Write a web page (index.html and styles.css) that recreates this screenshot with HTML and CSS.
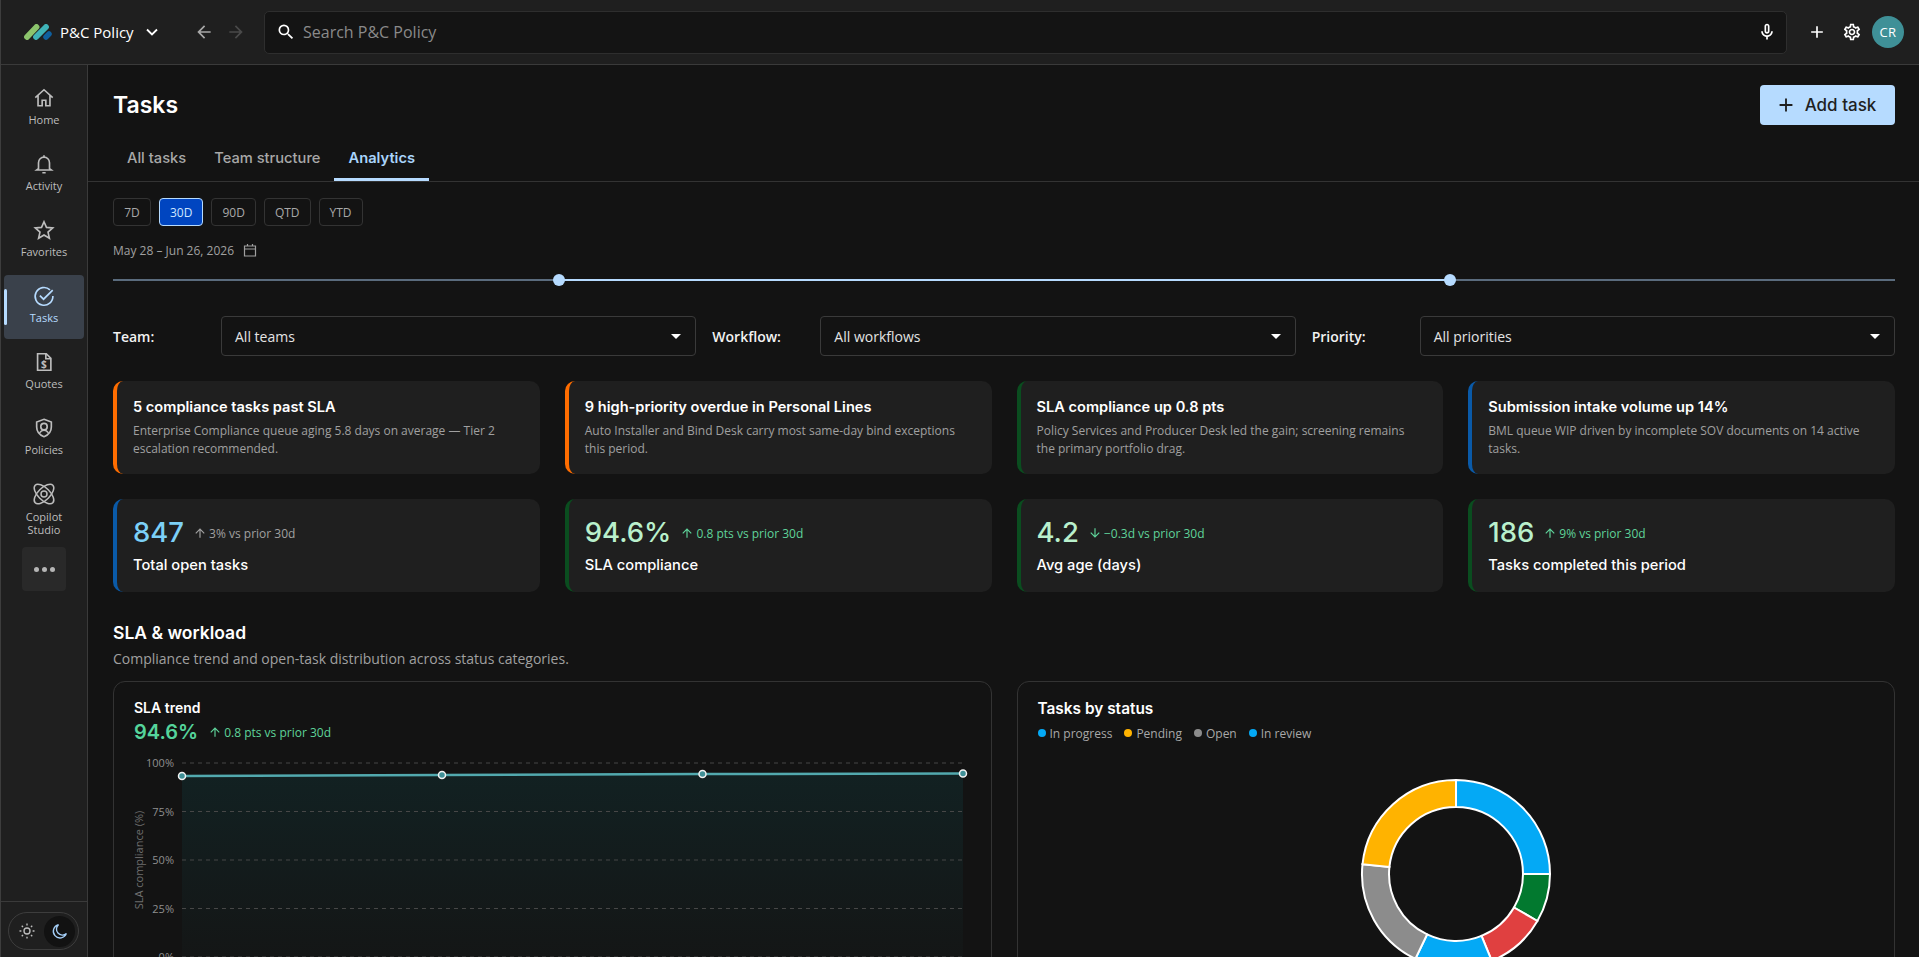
FILE: index.html
```html
<!DOCTYPE html>
<html lang="en">
<head>
    <meta charset="UTF-8">
    <meta name="viewport" content="width=device-width, initial-scale=1.0">
    <title>Tasks - P&amp;C Policy</title>
    <link rel="stylesheet" href="styles.css">
</head>
<body>
<div class="app">

    <header class="topbar">
        <div class="brand">
            <svg class="logo" viewBox="0 0 28 16" width="28" height="16">
                <line x1="3" y1="13" x2="12.5" y2="3" stroke="#8cc46c" stroke-width="5.8" stroke-linecap="round"/>
                <line x1="12" y1="13" x2="22" y2="3" stroke="#3fb3b8" stroke-width="5.8" stroke-linecap="round"/>
                <line x1="22" y1="13" x2="25" y2="10" stroke="#0f5f9e" stroke-width="5.5" stroke-linecap="round"/>
            </svg>
            <span class="brand-name">P&amp;C Policy</span>
            <svg class="chevron" viewBox="0 0 12 8" width="12" height="8"><path d="M1 1.5l5 5 5-5" fill="none" stroke="#fff" stroke-width="1.8"/></svg>
        </div>
        <div class="nav-arrows">
            <svg viewBox="0 0 24 24" width="20" height="20"><path d="M20 11v2H7.8l5.6 5.6L12 20l-8-8 8-8 1.4 1.4L7.8 11z" fill="#a8a8a8"/></svg>
            <svg viewBox="0 0 24 24" width="20" height="20"><path d="M4 11v2h12.2l-5.6 5.6L12 20l8-8-8-8-1.4 1.4 5.6 5.6z" fill="#4a4a4a"/></svg>
        </div>
        <div class="search">
            <svg viewBox="0 0 24 24" width="20" height="20"><path fill="#fff" d="M15.5 14h-.79l-.28-.27A6.471 6.471 0 0 0 16 9.5 6.5 6.5 0 1 0 9.5 16c1.61 0 3.09-.59 4.23-1.57l.27.28v.79l5 4.99L20.49 19l-4.99-5zm-6 0C7.01 14 5 11.99 5 9.5S7.01 5 9.5 5 14 7.01 14 9.5 11.99 14 9.5 14z"/></svg>
            <span class="search-text">Search P&amp;C Policy</span>
            <svg class="mic" viewBox="0 0 24 24" width="20" height="20"><path fill="#fff" d="M12 14c1.66 0 3-1.34 3-3V5c0-1.66-1.34-3-3-3S9 3.34 9 5v6c0 1.66 1.34 3 3 3zm-1-9c0-.55.45-1 1-1s1 .45 1 1v6c0 .55-.45 1-1 1s-1-.45-1-1V5z M17 11c0 2.76-2.24 5-5 5s-5-2.24-5-5H5c0 3.53 2.61 6.43 6 6.92V21h2v-3.08c3.39-.49 6-3.39 6-6.92h-2z"/></svg>
        </div>
        <div class="top-actions">
            <svg viewBox="0 0 24 24" width="20" height="20"><path fill="#fff" d="M19 13h-6v6h-2v-6H5v-2h6V5h2v6h6z"/></svg>
            <svg viewBox="0 0 24 24" width="20" height="20"><path fill="#fff" d="M19.43 12.98c.04-.32.07-.64.07-.98 0-.34-.03-.66-.07-.98l2.11-1.65c.19-.15.24-.42.12-.64l-2-3.46c-.09-.16-.26-.25-.44-.25-.06 0-.12.01-.17.03l-2.49 1c-.52-.4-1.08-.73-1.69-.98l-.38-2.65C14.46 2.18 14.25 2 14 2h-4c-.25 0-.46.18-.49.42l-.38 2.65c-.61.25-1.17.59-1.69.98l-2.49-1c-.06-.02-.12-.03-.18-.03-.17 0-.34.09-.43.25l-2 3.46c-.13.22-.07.49.12.64l2.11 1.65c-.04.32-.07.65-.07.98 0 .33.03.66.07.98l-2.11 1.65c-.19.15-.24.42-.12.64l2 3.46c.09.16.26.25.44.25.06 0 .12-.01.17-.03l2.49-1c.52.4 1.08.73 1.69.98l.38 2.65c.03.24.24.42.49.42h4c.25 0 .46-.18.49-.42l.38-2.65c.61-.25 1.17-.59 1.69-.98l2.49 1c.06.02.12.03.18.03.17 0 .34-.09.43-.25l2-3.46c.12-.22.07-.49-.12-.64l-2.11-1.65zm-1.98-1.71c.04.31.05.52.05.73 0 .21-.02.43-.05.73l-.14 1.13.89.7 1.08.84-.7 1.21-1.27-.51-1.04-.42-.9.68c-.43.32-.84.56-1.25.73l-1.06.43-.16 1.13-.2 1.35h-1.4l-.19-1.35-.16-1.13-1.06-.43c-.43-.18-.83-.41-1.23-.71l-.91-.7-1.06.43-1.27.51-.7-1.21 1.08-.84.89-.7-.14-1.13c-.03-.31-.05-.54-.05-.74s.02-.43.05-.73l.14-1.13-.89-.7-1.08-.84.7-1.21 1.27.51 1.04.42.9-.68c.43-.32.84-.56 1.25-.73l1.06-.43.16-1.13.2-1.35h1.39l.19 1.35.16 1.13 1.06.43c.43.18.83.41 1.23.71l.91.7 1.06-.43 1.27-.51.7 1.21-1.07.85-.89.7.14 1.13zM12 8c-2.21 0-4 1.79-4 4s1.79 4 4 4 4-1.79 4-4-1.79-4-4-4zm0 6c-1.1 0-2-.9-2-2s.9-2 2-2 2 .9 2 2-.9 2-2 2z"/></svg>
            <div class="avatar">CR</div>
        </div>
    </header>

    <div class="body-row">
        <nav class="rail">
            <a class="rail-item">
                <svg viewBox="0 0 24 24" width="22" height="22" class="rail-icon"><path d="M2.5 11.5 12 3l9.5 8.5M5.5 9v11.5H10V14.5h4v6h4.5V9"/></svg>
                <span>Home</span>
            </a>
            <a class="rail-item">
                <svg viewBox="0 0 24 24" width="22" height="22" class="rail-icon"><path d="M12 2.5v2M6 17v-6.5a6 6 0 0 1 12 0V17l2 1.5H4zM10.2 21.5h3.6"/></svg>
                <span>Activity</span>
            </a>
            <a class="rail-item">
                <svg viewBox="0 0 24 24" width="22" height="22" class="rail-icon"><path d="M12 3l2.7 6.2 6.8.6-5.1 4.5 1.5 6.7L12 17.5 6.100 21l1.500-6.700L2.500 9.800l6.800-.6z"/></svg>
                <span>Favorites</span>
            </a>
            <a class="rail-item active">
                <svg viewBox="0 0 24 24" width="22" height="22" class="rail-icon"><path d="M18.500 5.200A9.700 9.700 0 1 0 21.700 12M7.500 11.500l4 4L21.500 5.500"/></svg>
                <span>Tasks</span>
            </a>
            <a class="rail-item">
                <svg viewBox="0 0 24 24" width="22" height="22" class="rail-icon"><path d="M5 3h9.500L19.500 8v13H5zM14 3v5.500h5.500"/><text x="12" y="18.500" class="doc-sign">$</text></svg>
                <span>Quotes</span>
            </a>
            <a class="rail-item">
                <svg viewBox="0 0 24 24" width="22" height="22" class="rail-icon"><path d="M12 2.500 20 5.500V11c0 5-3.300 8.800-8 10.500C7.300 19.800 4 16 4 11V5.500zM7.500 17c1-1.800 2.600-2.500 4.500-2.500s3.500.7 4.500 2.500"/><circle cx="12" cy="10.500" r="3.500"/></svg>
                <span>Policies</span>
            </a>
            <a class="rail-item">
                <svg viewBox="0 0 24 24" width="24" height="24" class="rail-icon thin"><ellipse cx="12" cy="12" rx="12.500" ry="6" transform="rotate(45 12 12)"/><ellipse cx="12" cy="12" rx="12.500" ry="6" transform="rotate(-45 12 12)"/><circle cx="12" cy="12" r="3"/></svg>
                <span>Copilot<br>Studio</span>
            </a>
            <div class="rail-more"><i></i><i></i><i></i></div>
            <div class="theme-wrap">
                <div class="theme-toggle">
                    <span class="theme-sun">
                        <svg viewBox="0 0 24 24" width="18" height="18" class="rail-icon"><circle cx="12" cy="12" r="4"/><path d="M12 2v2.500M12 19.500V22M2 12h2.500M19.500 12H22M5 5l1.700 1.700M17.300 17.300 19 19M5 19l1.700-1.700M17.300 6.700 19 5"/></svg>
                    </span>
                    <span class="theme-moon">
                        <svg viewBox="0 0 24 24" width="18" height="18"><path d="M20.500 15.500A9 9 0 1 1 10 3.500a7.500 7.500 0 0 0 10.500 12z" fill="none" stroke="#a5cff8" stroke-width="1.800"/></svg>
                    </span>
                </div>
            </div>
        </nav>

        <main class="main">
            <div class="page-head">
                <h1>Tasks</h1>
                <button class="add-btn">
                    <svg viewBox="0 0 24 24" width="22" height="22"><path fill="#1f1f1f" d="M19 13h-6v6h-2v-6H5v-2h6V5h2v6h6z"/></svg>
                    Add task
                </button>
            </div>

            <div class="tabs">
                <a class="tab">All tasks</a>
                <a class="tab">Team structure</a>
                <a class="tab active">Analytics</a>
            </div>

            <div class="range-row">
                <button class="range">7D</button>
                <button class="range on">30D</button>
                <button class="range">90D</button>
                <button class="range">QTD</button>
                <button class="range">YTD</button>
            </div>

            <div class="date-row">
                May 28 – Jun 26, 2026
                <svg viewBox="0 0 14 14" width="14" height="14"><path d="M1.500 3h11v10h-11zM1.500 6h11M4.500 1v2.500M9.500 1v2.500" fill="none" stroke="#a0a0a0" stroke-width="1.200"/></svg>
            </div>

            <div class="slider">
                <div class="slider-on" style="left: 25.03%; right: 25%"></div>
                <div class="thumb" style="left: 25.03%"></div>
                <div class="thumb" style="left: 75%"></div>
            </div>

            <div class="filters">
                <div class="filter">
                    <label>Team:</label>
                    <div class="select">All teams<i></i></div>
                </div>
                <div class="filter">
                    <label>Workflow:</label>
                    <div class="select">All workflows<i></i></div>
                </div>
                <div class="filter">
                    <label>Priority:</label>
                    <div class="select">All priorities<i></i></div>
                </div>
            </div>

            <div class="card-grid insights">
                <div class="card edge-orange">
                    <h3>5 compliance tasks past SLA</h3>
                    <p>Enterprise Compliance queue aging 5.8 days on average — Tier 2 escalation recommended.</p>
                </div>
                <div class="card edge-orange">
                    <h3>9 high-priority overdue in Personal Lines</h3>
                    <p>Auto Installer and Bind Desk carry most same-day bind exceptions this period.</p>
                </div>
                <div class="card edge-green">
                    <h3>SLA compliance up 0.8 pts</h3>
                    <p>Policy Services and Producer Desk led the gain; screening remains the primary portfolio drag.</p>
                </div>
                <div class="card edge-blue">
                    <h3>Submission intake volume up 14%</h3>
                    <p>BML queue WIP driven by incomplete SOV documents on 14 active tasks.</p>
                </div>
            </div>

            <div class="card-grid kpis">
                <div class="card edge-blue">
                    <div class="kpi-top">
                        <span class="kpi-num blue">847</span>
                        <span class="delta gray"><svg viewBox="0 0 24 24" width="14" height="14"><path d="M4 12l1.410 1.410L11 7.830V20h2V7.830l5.580 5.590L20 12l-8-8z"/></svg>3% vs prior 30d</span>
                    </div>
                    <div class="kpi-label">Total open tasks</div>
                </div>
                <div class="card edge-green">
                    <div class="kpi-top">
                        <span class="kpi-num mint">94.6%</span>
                        <span class="delta"><svg viewBox="0 0 24 24" width="14" height="14"><path d="M4 12l1.410 1.410L11 7.830V20h2V7.830l5.580 5.590L20 12l-8-8z"/></svg>0.8 pts vs prior 30d</span>
                    </div>
                    <div class="kpi-label">SLA compliance</div>
                </div>
                <div class="card edge-green">
                    <div class="kpi-top">
                        <span class="kpi-num mint">4.2</span>
                        <span class="delta"><svg viewBox="0 0 24 24" width="14" height="14"><path d="M20 12l-1.410-1.410L13 16.170V4h-2v12.170l-5.580-5.590L4 12l8 8z"/></svg>−0.3d vs prior 30d</span>
                    </div>
                    <div class="kpi-label">Avg age (days)</div>
                </div>
                <div class="card edge-green">
                    <div class="kpi-top">
                        <span class="kpi-num mint">186</span>
                        <span class="delta"><svg viewBox="0 0 24 24" width="14" height="14"><path d="M4 12l1.410 1.410L11 7.830V20h2V7.830l5.580 5.590L20 12l-8-8z"/></svg>9% vs prior 30d</span>
                    </div>
                    <div class="kpi-label">Tasks completed this period</div>
                </div>
            </div>

            <h2 class="section-title">SLA &amp; workload</h2>
            <p class="section-sub">Compliance trend and open-task distribution across status categories.</p>

            <div class="charts">
                <section class="chart-card">
                    <h4>SLA trend</h4>
                    <div class="trend-head">
                        <span class="trend-num">94.6%</span>
                        <span class="delta"><svg viewBox="0 0 24 24" width="14" height="14"><path d="M4 12l1.410 1.410L11 7.830V20h2V7.830l5.580 5.590L20 12l-8-8z"/></svg>0.8 pts vs prior 30d</span>
                    </div>
                    <svg class="trend" viewBox="0 0 836 220" width="836" height="220">
                        <defs>
                            <linearGradient id="areaFill" x1="0" y1="0" x2="0" y2="1">
                                <stop offset="0" stop-color="#122122"/>
                                <stop offset="1" stop-color="#141616"/>
                            </linearGradient>
                        </defs>
                        <path d="M48 26 L308 25 L568.500 24 L829 23.500 V207 H48z" fill="url(#areaFill)"/>
                        <g class="grid">
                            <line x1="48" y1="13" x2="829" y2="13"/>
                            <line x1="48" y1="61.500" x2="829" y2="61.500"/>
                            <line x1="48" y1="110" x2="829" y2="110"/>
                            <line x1="48" y1="158.500" x2="829" y2="158.500"/>
                            <line x1="48" y1="207" x2="829" y2="207"/>
                        </g>
                        <g class="ticks">
                            <text x="40" y="17">100%</text>
                            <text x="40" y="65.500">75%</text>
                            <text x="40" y="114">50%</text>
                            <text x="40" y="162.500">25%</text>
                            <text x="40" y="211">0%</text>
                        </g>
                        <text class="axis-name" transform="translate(9 110) rotate(-90)">SLA compliance (%)</text>
                        <polyline points="48,26 308,25 568.500,24 829,23.500" fill="none" stroke="#52a9ae" stroke-width="2.500"/>
                        <g class="points">
                            <circle cx="48" cy="26" r="3.500"/>
                            <circle cx="308" cy="25" r="3.500"/>
                            <circle cx="568.500" cy="24" r="3.500"/>
                            <circle cx="829" cy="23.500" r="3.500"/>
                        </g>
                    </svg>
                </section>

                <section class="chart-card">
                    <h4 class="status-title">Tasks by status</h4>
                    <div class="legend">
                        <span><i class="dot-blue"></i>In progress</span>
                        <span><i class="dot-amber"></i>Pending</span>
                        <span><i class="dot-gray"></i>Open</span>
                        <span><i class="dot-blue"></i>In review</span>
                    </div>
                    <svg class="donut" viewBox="-96 -96 192 192" width="192" height="192">
                        <g stroke="#fff" stroke-width="2">
                            <path fill="#04a9f5" d="M0 -94A94 94 0 0 1 94 0H67A67 67 0 0 0 0 -67z"/>
                            <path fill="#02792f" d="M94 0A94 94 0 0 1 81.400 47L58 33.500A67 67 0 0 0 67 0z"/>
                            <path fill="#e04040" d="M81.400 47A94 94 0 0 1 35.800 86.900L25.500 61.900A67 67 0 0 0 58 33.500z"/>
                            <path fill="#04a9f5" d="M35.800 86.900A94 94 0 0 1 -40.600 84.800L-28.900 60.400A67 67 0 0 0 25.500 61.900z"/>
                            <path fill="#8c8c8c" d="M-40.600 84.800A94 94 0 0 1 -93.500 -9.800L-66.600 -7A67 67 0 0 0 -28.900 60.400z"/>
                            <path fill="#ffb300" d="M-93.500 -9.800A94 94 0 0 1 0 -94V-67A67 67 0 0 0 -66.600 -7z"/>
                        </g>
                    </svg>
                </section>
            </div>
        </main>
    </div>
</div>
</body>
</html>
```

FILE: styles.css
```css
* {
    margin: 0;
    padding: 0;
    box-sizing: border-box;
}

html, body {
    height: 100%;
    overflow: hidden;
}

body {
    font-family: "Open Sans", "Noto Sans", Arial, sans-serif;
    background-color: #131313;
    color: #fff;
}

.app {
    height: 100vh;
    display: flex;
    flex-direction: column;
    border-left: 1px solid #3d3d3d;
}

/* top bar */
.topbar {
    height: 65px;
    flex-shrink: 0;
    display: flex;
    align-items: center;
    background-color: #1f1f1f;
    border-bottom: 1px solid #3a3a3a;
    padding: 0 15px 0 23px;
}

.brand {
    display: flex;
    align-items: center;
    width: 170px;
}

.brand-name {
    font-size: 15px;
    font-weight: 500;
    margin-left: 8px;
    margin-right: 12px;
    white-space: nowrap;
}

.nav-arrows {
    display: flex;
    gap: 12px;
    width: 70px;
}

.search {
    width: 1523px;
    height: 43px;
    display: flex;
    align-items: center;
    background-color: #141414;
    border: 1px solid #2e2e2e;
    border-radius: 5px;
    padding: 0 9px 0 11px;
}

.search-text {
    margin-left: 7px;
    font-size: 16px;
    color: #8a8a8a;
    flex-grow: 1;
}

.top-actions {
    display: flex;
    align-items: center;
    margin-left: 20px;
    gap: 15px;
}

.top-actions svg:nth-child(2) {
    margin-right: -5px;
}

.avatar {
    width: 32px;
    height: 32px;
    border-radius: 50%;
    background-color: #3f9097;
    color: #fff;
    font-size: 13px;
    font-weight: 500;
    letter-spacing: 0.5px;
    display: flex;
    align-items: center;
    justify-content: center;
}

.body-row {
    flex-grow: 1;
    display: flex;
    min-height: 0;
}

/* left rail */
.rail {
    width: 87px;
    flex-shrink: 0;
    background-color: #1f1f1f;
    border-right: 1px solid #3a3a3a;
    padding: 12px 3px 0;
    display: flex;
    flex-direction: column;
    align-items: stretch;
    gap: 2px;
}

.rail-item {
    height: 64px;
    border-radius: 4px;
    padding-top: 10px;
    display: flex;
    flex-direction: column;
    align-items: center;
    gap: 4px;
    font-size: 11px;
    line-height: 14px;
    color: #bdbdbd;
    text-align: center;
    position: relative;
}

.rail-item:nth-child(7) {
    height: 68px;
    line-height: 13px;
}

.rail-item:nth-child(7) .rail-icon {
    margin: -1px 0 0;
}

.rail-icon {
    fill: none;
    stroke: #bdbdbd;
    stroke-width: 1.800;
    flex-shrink: 0;
    overflow: visible;
}

.rail-icon.thin {
    stroke-width: 1.500;
}

.doc-sign {
    fill: #bdbdbd;
    stroke: none;
    font-family: "Open Sans", sans-serif;
    font-size: 11px;
    font-weight: 700;
    text-anchor: middle;
}

.rail-item.active {
    background-color: #3a414b;
    color: #b6dbff;
}

.rail-item.active .rail-icon {
    stroke: #b6dbff;
}

.rail-item.active::before {
    content: "";
    position: absolute;
    left: 0;
    top: 14px;
    width: 3px;
    height: 36px;
    border-radius: 2px;
    background-color: #b6dbff;
}

.rail-more {
    width: 44px;
    height: 44px;
    margin: 4px auto 0;
    border-radius: 4px;
    background-color: #292929;
    display: flex;
    align-items: center;
    justify-content: center;
    gap: 3px;
}

.rail-more i {
    width: 5px;
    height: 5px;
    border-radius: 50%;
    background-color: #b5b5b5;
}

.theme-wrap {
    margin: auto -3px 0;
    border-top: 1px solid #3a3a3a;
    padding: 10px 7px 7px;
}

.theme-toggle {
    height: 38px;
    width: 71px;
    border: 1px solid #3d3d3d;
    border-radius: 19px;
    display: flex;
    align-items: center;
    padding: 0 3px 0 9px;
    justify-content: space-between;
}

.theme-sun {
    display: flex;
}

.theme-moon {
    width: 31px;
    height: 31px;
    border-radius: 50%;
    background-color: #121212;
    display: flex;
    align-items: center;
    justify-content: center;
}

/* main column */
.main {
    flex-grow: 1;
    min-width: 0;
    padding: 20px 24px 0 25px;
    overflow: hidden;
}

.page-head {
    display: flex;
    align-items: center;
    justify-content: space-between;
    height: 40px;
    margin-bottom: 10px;
}

.page-head h1 {
    font-family: Inter, "Open Sans", sans-serif;
    font-size: 23px;
    font-weight: 600;
}

.add-btn {
    width: 135px;
    height: 40px;
    border: none;
    border-radius: 4px;
    padding-right: 4px;
    background-color: #b6dbff;
    color: #1f1f1f;
    font-family: Inter, sans-serif;
    font-size: 17px;
    font-weight: 500;
    display: flex;
    align-items: center;
    justify-content: center;
    gap: 8px;
}

.tabs {
    display: flex;
    height: 47px;
    margin: 0 -24px 0 -25px;
    padding-left: 25px;
    border-bottom: 1px solid #333;
}

.tab {
    height: 46px;
    padding: 0 14px;
    line-height: 46px;
    font-family: Inter, sans-serif;
    font-size: 14.7px;
    font-weight: 500;
    color: #a8a8a8;
}

.tab.active {
    color: #a9d4fb;
    font-weight: 600;
    border-bottom: 3px solid #b6dbff;
    border-radius: 3px 3px 0 0;
}

.range-row {
    display: flex;
    gap: 8px;
    margin-top: 16px;
}

.range {
    height: 28px;
    padding: 0 10px;
    min-width: 38px;
    background: transparent;
    border: 1px solid #333;
    border-radius: 4px;
    color: #a8a8a8;
    font-family: "Open Sans", sans-serif;
    font-size: 12px;
}

.range.on {
    background-color: #0045c0;
    border-color: #b6dbff;
    color: #cfe5ff;
    font-weight: 500;
}

.date-row {
    display: flex;
    align-items: center;
    gap: 9px;
    margin-top: 15px;
    height: 18px;
    font-size: 12px;
    color: #a0a0a0;
}

.slider {
    position: relative;
    height: 2px;
    margin-top: 20px;
    background-color: #5a6b7d;
}

.slider-on {
    position: absolute;
    top: 0;
    height: 2px;
    background-color: #b6dbff;
}

.thumb {
    position: absolute;
    top: -5px;
    width: 12px;
    height: 12px;
    margin-left: -6px;
    border-radius: 50%;
    background-color: #b6dbff;
}

.filters {
    display: grid;
    grid-template-columns: repeat(3, 1fr);
    gap: 16px;
    margin-top: 35px;
}

.filter {
    display: flex;
    align-items: center;
}

.filter label {
    width: 108px;
    flex-shrink: 0;
    font-size: 14px;
    font-weight: 600;
    color: #f2f2f2;
}

.select {
    flex-grow: 1;
    height: 40px;
    border: 1px solid #3a3a3a;
    border-radius: 4px;
    padding: 0 13px;
    display: flex;
    align-items: center;
    justify-content: space-between;
    font-size: 14px;
    color: #e4e4e4;
}

.select i {
    width: 0;
    height: 0;
    border-left: 5px solid transparent;
    border-right: 5px solid transparent;
    border-top: 5px solid #fff;
    margin-right: 1px;
}

.card-grid {
    display: grid;
    grid-template-columns: repeat(4, 1fr);
    gap: 25px;
}

.insights {
    margin-top: 25px;
}

.kpis {
    margin-top: 25px;
}

.card {
    height: 93px;
    background-color: #1f1f1f;
    border-radius: 10px;
    border-left: 4px solid #333;
    padding: 16px 20px 0 16px;
}

.edge-orange { border-left-color: #ff6d00; }
.edge-green { border-left-color: #0a4d1f; }
.edge-blue { border-left-color: #0a5aa8; }

.card h3 {
    font-family: Inter, sans-serif;
    font-size: 14.6px;
    line-height: 20px;
    font-weight: 600;
}

.card p {
    margin-top: 5px;
    font-size: 12px;
    line-height: 18px;
    color: #a0a0a0;
}

.kpi-top {
    display: flex;
    align-items: center;
    height: 32px;
    gap: 9px;
}

.kpi-num {
    font-family: Inter, sans-serif;
    font-size: 27.5px;
    font-weight: 500;
    position: relative;
    top: 1px;
}

.kpi-num.blue { color: #7cd0f7; }
.kpi-num.mint { color: #b9f0cc; }

.delta {
    display: inline-flex;
    align-items: center;
    gap: 2px;
    font-size: 12px;
    color: #5fd39a;
    padding-top: 4px;
}

.delta svg {
    fill: #5fd39a;
}

.delta.gray {
    color: #a0a0a0;
}

.delta.gray svg {
    fill: #a0a0a0;
}

.kpi-label {
    margin-top: 8px;
    font-family: Inter, sans-serif;
    font-size: 14.7px;
    line-height: 20px;
    font-weight: 500;
}

.section-title {
    margin-top: 27px;
    font-family: Inter, sans-serif;
    font-size: 17.5px;
    line-height: 28px;
    font-weight: 600;
}

.section-sub {
    margin-top: 2px;
    font-size: 14px;
    line-height: 20px;
    color: #a0a0a0;
}

.charts {
    display: grid;
    grid-template-columns: minmax(0, 1fr) minmax(0, 1fr);
    gap: 25px;
    margin-top: 12px;
}

.chart-card {
    height: 400px;
    border: 1px solid #333;
    border-radius: 12px;
    padding: 16px 20px;
}

.chart-card h4 {
    font-family: Inter, sans-serif;
    font-size: 14px;
    line-height: 20px;
    font-weight: 600;
}

.chart-card .status-title {
    font-size: 15.4px;
    line-height: 22px;
}

.trend-head {
    display: flex;
    align-items: center;
    height: 28px;
    gap: 10px;
}

.trend-num {
    font-family: Inter, sans-serif;
    font-size: 20px;
    font-weight: 600;
    color: #55d49b;
}

.trend-head .delta {
    padding-top: 0;
}

.trend {
    display: block;
    margin-top: 4px;
}

.grid line {
    stroke: #474747;
    stroke-width: 1;
    stroke-dasharray: 4 4;
}

.ticks text {
    font-size: 11px;
    fill: #8f8f8f;
    text-anchor: end;
}

.axis-name {
    font-size: 11px;
    fill: #6f6f6f;
    text-anchor: middle;
}

.points circle {
    fill: #3f9097;
    stroke: #f2f2f2;
    stroke-width: 1.500;
}

.legend {
    display: flex;
    gap: 12px;
    height: 20px;
    margin-top: 3px;
    align-items: center;
    font-size: 12px;
    color: #a8a8a8;
}

.legend span {
    display: flex;
    align-items: center;
    gap: 4px;
}

.legend i {
    width: 8px;
    height: 8px;
    border-radius: 50%;
}

.dot-blue { background-color: #04a9f5; }
.dot-amber { background-color: #ffb300; }
.dot-gray { background-color: #8c8c8c; }

.donut {
    display: block;
    margin: 35px auto 0;
}
```
